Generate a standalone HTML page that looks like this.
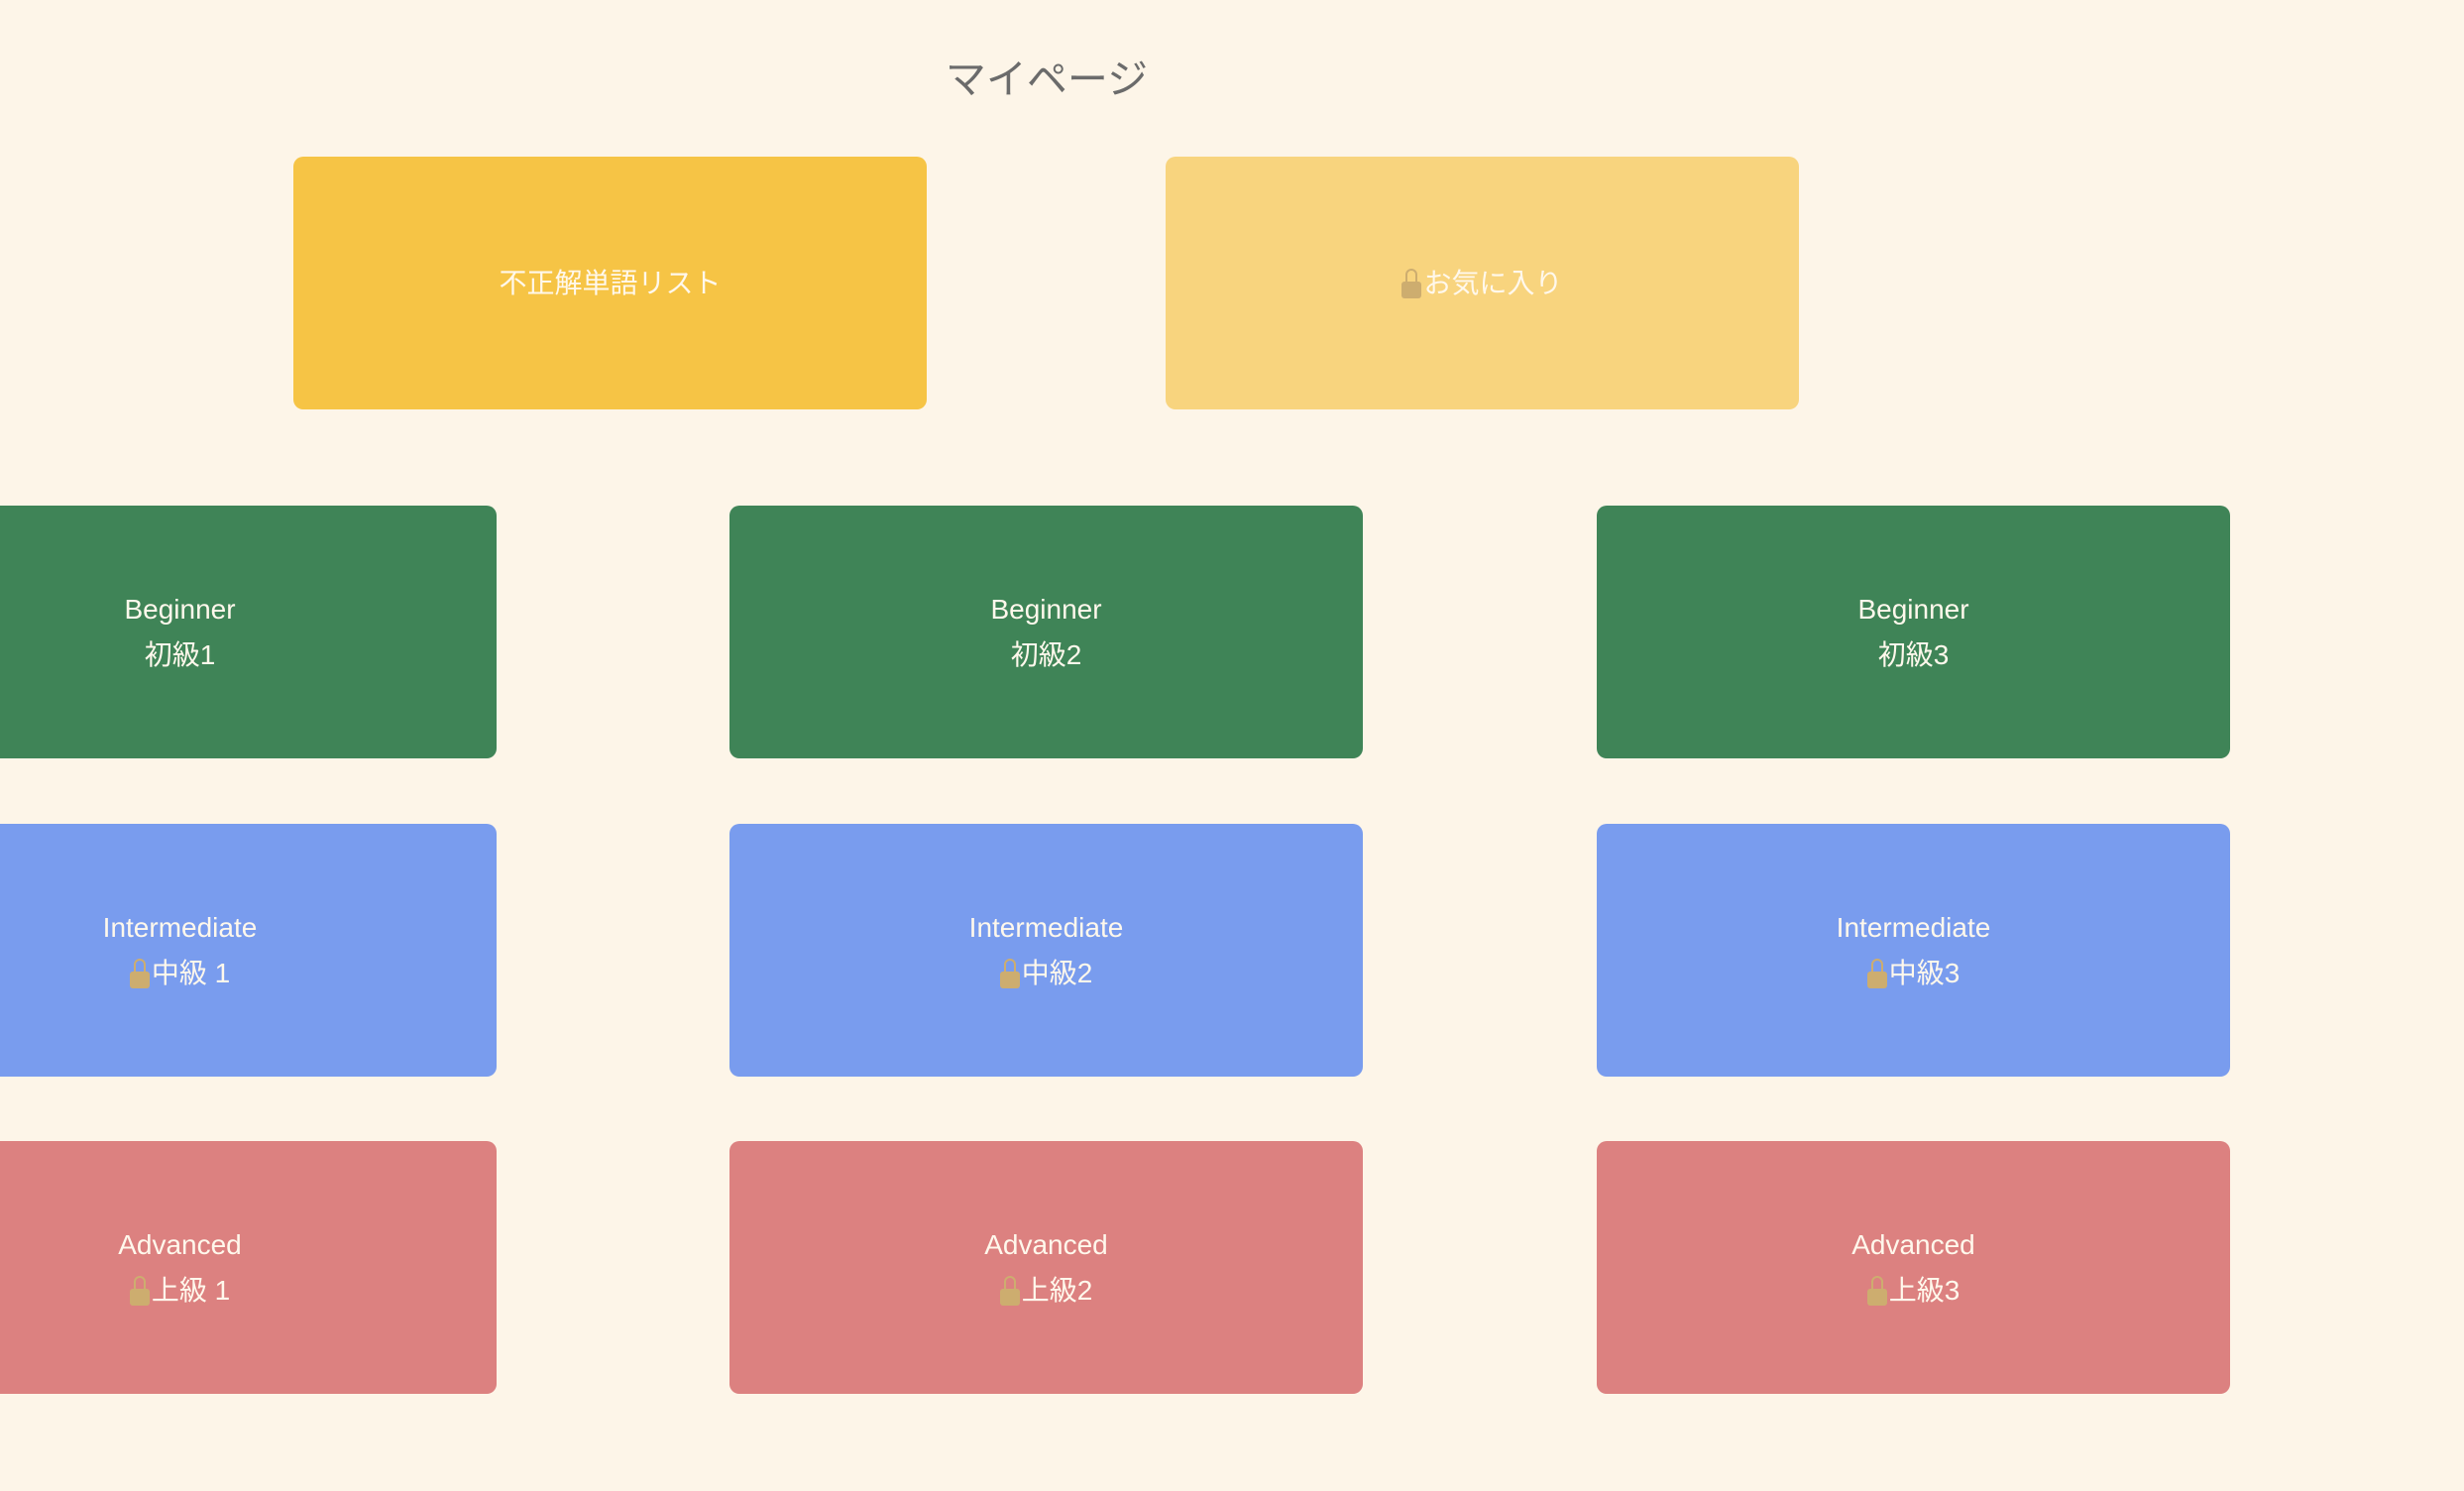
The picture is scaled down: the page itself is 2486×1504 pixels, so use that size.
<!DOCTYPE html>
<html><head><meta charset="utf-8"><style>
html,body{margin:0;padding:0;width:2486px;height:1504px;overflow:hidden;background:#fdf5e8;}
body{position:relative;font-family:"Liberation Sans","Noto Sans CJK JP",sans-serif;}
.t{position:absolute;left:0;width:2112px;top:50px;text-align:center;font-size:41px;color:#6b6b6b;line-height:60px;}
.c{position:absolute;width:639px;height:255px;border-radius:10px;display:flex;flex-direction:column;align-items:center;justify-content:center;color:#fff8ec;font-size:28px;line-height:46px;}
.y1{background:#f6c445}.y2{background:#f8d47e}.g{background:#3f8457}.b{background:#799cee}.r{background:#dc8180}
.lk{display:inline-block;width:20px;height:32px;vertical-align:-6px;margin-right:2px;}
</style></head><body>
<div class="t">マイページ</div>
<div class="c y1" style="left:296px;top:158px">不正解単語リスト</div>
<div class="c y2" style="left:1176px;top:158px"><div><svg class="lk" viewBox="0 0 20 32"><path d="M5 16V8a5 5 0 0 1 10 0v8" fill="none" stroke="#cdad6f" stroke-width="2"/><rect x="0" y="15" width="20" height="17" rx="3" fill="#cdad6f"/></svg>お気に入り</div></div>

<div class="c g" style="left:-138px;top:510px"><div>Beginner</div><div>初級1</div></div>
<div class="c g" style="left:736px;top:510px"><div>Beginner</div><div>初級2</div></div>
<div class="c g" style="left:1611px;top:510px"><div>Beginner</div><div>初級3</div></div>

<div class="c b" style="left:-138px;top:831px"><div>Intermediate</div><div><svg class="lk" viewBox="0 0 20 32"><path d="M5 16V8a5 5 0 0 1 10 0v8" fill="none" stroke="#cdad6f" stroke-width="2"/><rect x="0" y="15" width="20" height="17" rx="3" fill="#cdad6f"/></svg>中級 1</div></div>
<div class="c b" style="left:736px;top:831px"><div>Intermediate</div><div><svg class="lk" viewBox="0 0 20 32"><path d="M5 16V8a5 5 0 0 1 10 0v8" fill="none" stroke="#cdad6f" stroke-width="2"/><rect x="0" y="15" width="20" height="17" rx="3" fill="#cdad6f"/></svg>中級2</div></div>
<div class="c b" style="left:1611px;top:831px"><div>Intermediate</div><div><svg class="lk" viewBox="0 0 20 32"><path d="M5 16V8a5 5 0 0 1 10 0v8" fill="none" stroke="#cdad6f" stroke-width="2"/><rect x="0" y="15" width="20" height="17" rx="3" fill="#cdad6f"/></svg>中級3</div></div>

<div class="c r" style="left:-138px;top:1151px"><div>Advanced</div><div><svg class="lk" viewBox="0 0 20 32"><path d="M5 16V8a5 5 0 0 1 10 0v8" fill="none" stroke="#cdad6f" stroke-width="2"/><rect x="0" y="15" width="20" height="17" rx="3" fill="#cdad6f"/></svg>上級 1</div></div>
<div class="c r" style="left:736px;top:1151px"><div>Advanced</div><div><svg class="lk" viewBox="0 0 20 32"><path d="M5 16V8a5 5 0 0 1 10 0v8" fill="none" stroke="#cdad6f" stroke-width="2"/><rect x="0" y="15" width="20" height="17" rx="3" fill="#cdad6f"/></svg>上級2</div></div>
<div class="c r" style="left:1611px;top:1151px"><div>Advanced</div><div><svg class="lk" viewBox="0 0 20 32"><path d="M5 16V8a5 5 0 0 1 10 0v8" fill="none" stroke="#cdad6f" stroke-width="2"/><rect x="0" y="15" width="20" height="17" rx="3" fill="#cdad6f"/></svg>上級3</div></div>
</body></html>
